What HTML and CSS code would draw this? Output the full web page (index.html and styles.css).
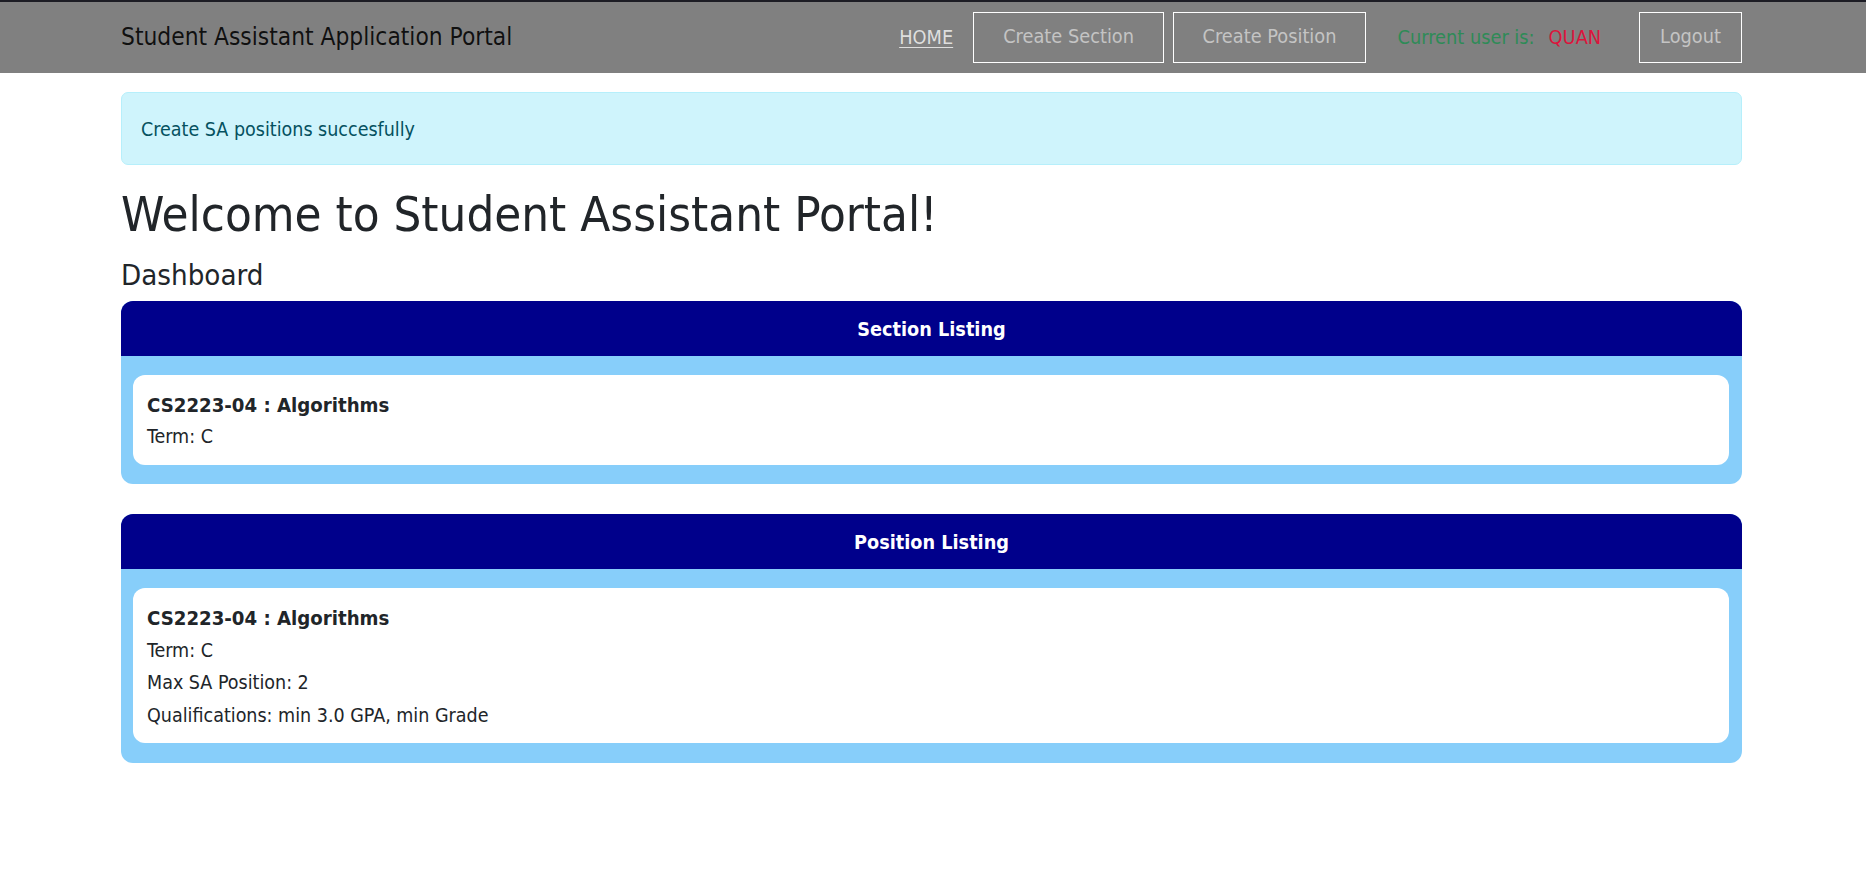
FILE: index.html
```html
<!DOCTYPE html>
<html lang="en">
<head>
<meta charset="utf-8">
<title>Student Assistant Application Portal</title>
<link rel="stylesheet" href="styles.css">
</head>
<body>
<nav class="navbar">
  <div class="nav-inner">
    <a class="brand" href="#">Student Assistant Application Portal</a>
    <div class="nav-right">
      <a class="nav-home" href="#">HOME</a>
      <a class="nav-btn btn-section" href="#">Create Section</a>
      <a class="nav-btn btn-position" href="#">Create Position</a>
      <span class="user"><span class="user-label">Current user is:</span><span class="user-name">QUAN</span></span>
      <a class="nav-btn btn-logout" href="#">Logout</a>
    </div>
  </div>
</nav>
<main class="container">
  <div class="alert">Create SA positions succesfully</div>
  <h1 class="title">Welcome to Student Assistant Portal!</h1>
  <h4 class="subtitle">Dashboard</h4>

  <section class="panel">
    <div class="panel-head">Section Listing</div>
    <div class="panel-body">
      <div class="item">
        <div class="item-title">CS2223-04 : Algorithms</div>
        <div class="item-line">Term: C</div>
      </div>
    </div>
  </section>

  <section class="panel">
    <div class="panel-head">Position Listing</div>
    <div class="panel-body">
      <div class="item">
        <div class="item-title">CS2223-04 : Algorithms</div>
        <div class="item-line">Term: C</div>
        <div class="item-line">Max SA Position: 2</div>
        <div class="item-line">Qualifications: min 3.0 GPA, min Grade</div>
      </div>
    </div>
  </section>
</main>
</body>
</html>
```

FILE: styles.css
```css
html, body {
  margin: 0;
  padding: 0;
  background: #ffffff;
}

body {
  font-family: "DejaVu Sans Condensed", "DejaVu Sans", sans-serif;
  font-stretch: condensed;
  font-size: 19.5px;
  line-height: 1.5;
  color: #212529;
}

a {
  text-decoration: none;
}

/* Navbar */
.navbar {
  background: #808080;
  border-top: 2px solid #1c1c24;
  height: 71px;
}

.nav-inner {
  width: 1621px;
  margin: 0 auto 0 121px;
  height: 100%;
  display: flex;
  align-items: center;
  justify-content: space-between;
}

.brand {
  font-size: 24.3px;
  color: rgba(0, 0, 0, 0.88);
  line-height: 1.2;
  margin-top: -1px;
}

.nav-right {
  display: flex;
  align-items: center;
  font-size: 19.8px;
}

.nav-home {
  color: #dedede;
  text-decoration: underline;
  text-underline-offset: 3px;
  margin-right: 20px;
}

.nav-btn {
  display: flex;
  align-items: center;
  height: 49px;
  border: 1px solid #ffffff;
  color: #c4c4c4;
  margin-top: -1px;
}

.btn-section {
  padding: 0 29px;
  margin-right: 8.5px;
}

.btn-position {
  padding: 0 29px;
}

.btn-logout {
  padding: 0 20px;
}

.user {
  margin-left: 31px;
  margin-right: 38px;
  display: flex;
  gap: 14px;
}

.user-label {
  color: #2e8b57;
}

.user-name {
  color: #dc143c;
}

/* Content */
.container {
  width: 1621px;
  margin: 0 auto 0 121px;
  padding-top: 19px;
}

.alert {
  background: #cff4fc;
  border: 1px solid #b6effb;
  border-radius: 7px;
  color: #055160;
  padding: 22px 19px 20px 19px;
  line-height: 29px;
}

.title {
  font-size: 48.8px;
  font-weight: 400;
  line-height: 1.2;
  margin: 21px 0 0 0;
}

.subtitle {
  font-size: 29.2px;
  font-weight: 400;
  line-height: 1.2;
  margin: 13px 0 8px 0;
}

.panel {
  background: #87cefa;
  border-radius: 12px;
  overflow: hidden;
  margin-bottom: 30px;
}

.panel-head {
  background: #00008b;
  color: #ffffff;
  font-weight: 700;
  text-align: center;
  height: 55px;
  line-height: 57px;
  font-size: 19.7px;
}

.panel-body {
  padding: 19px 13px 19.5px 12px;
}

.item {
  background: #ffffff;
  border-radius: 12px;
  padding: 14px 14px 11px 14px;
}

.item-title,
.item-line {
  line-height: 32.5px;
}

.item-title {
  font-weight: 700;
  font-size: 20.2px;
}
```
